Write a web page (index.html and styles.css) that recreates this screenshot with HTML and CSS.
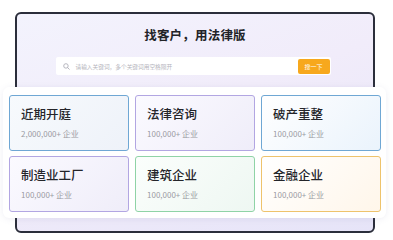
FILE: index.html
```html
<!DOCTYPE html>
<html lang="zh">
<head>
<meta charset="utf-8">
<link rel="stylesheet" href="styles.css">
</head>
<body>
<div class="frame">
  <h1 class="title">找客户，用法律版</h1>
  <div class="search">
    <svg class="search-icon" width="7" height="7" viewBox="0 0 10 10"><circle cx="4.2" cy="4.2" r="3.2" fill="none" stroke="#b0b0b8" stroke-width="1.3"/><path d="M6.6 6.6 L9 9" stroke="#b0b0b8" stroke-width="1.3" stroke-linecap="round"/></svg>
    <span class="placeholder">请输入关键词，多个关键词用空格隔开</span>
    <span class="btn">搜一下</span>
  </div>
  <div class="panel">
    <div class="card blue"><div class="c-title">近期开庭</div><div class="c-sub">2,000,000+ 企业</div></div>
    <div class="card purple"><div class="c-title">法律咨询</div><div class="c-sub">100,000+ 企业</div></div>
    <div class="card blue2"><div class="c-title">破产重整</div><div class="c-sub">100,000+ 企业</div></div>
    <div class="card purple"><div class="c-title">制造业工厂</div><div class="c-sub">100,000+ 企业</div></div>
    <div class="card green"><div class="c-title">建筑企业</div><div class="c-sub">100,000+ 企业</div></div>
    <div class="card orange"><div class="c-title">金融企业</div><div class="c-sub">100,000+ 企业</div></div>
  </div>
</div>
</body>
</html>
```
FILE: styles.css
```css
* { box-sizing: border-box; }
html, body { margin: 0; padding: 0; background: #ffffff; }
body {
  width: 393px;
  height: 240px;
  overflow: hidden;
  font-family: "Noto Sans CJK SC", "Noto Sans", sans-serif;
  padding-top: 12px;
}
.frame {
  margin-left: 15px;
  width: 360px;
  height: 221px;
  border: 2px solid #2b2e3b;
  border-radius: 6px;
  background: linear-gradient(160deg, #f3f3fd 0%, #f1ecfa 45%, #e6e4f8 100%);
  padding-top: 12px;
  display: flex;
  flex-direction: column;
  align-items: center;
}
.title {
  margin: 0;
  font-size: 12.5px;
  line-height: 18px;
  font-weight: 700;
  color: #222327;
  letter-spacing: 0.2px;
}
.search {
  margin-top: 13px;
  width: 275px;
  height: 18px;
  background: #ffffff;
  border-radius: 2px;
  display: flex;
  align-items: center;
  padding: 0 0 0 7px;
  margin-left: -4px;
}
.search-icon { flex: none; }
.placeholder {
  margin-left: 6px;
  font-size: 5.7px;
  color: #b4b4bc;
  flex: 1;
}
.btn {
  width: 32px;
  height: 15px;
  margin-right: 1px;
  background: #f7a81d;
  border-radius: 2px;
  color: #fff;
  font-size: 6px;
  display: flex;
  align-items: center;
  justify-content: center;
}
.panel {
  margin-top: 12px;
  align-self: stretch;
  margin-left: -14px;
  margin-right: -13px;
  background: #ffffff;
  border-radius: 6px;
  box-shadow: 0 1px 6px rgba(120, 120, 170, 0.12);
  padding: 8px 5px 6px 6px;
  display: grid;
  grid-template-columns: repeat(3, 120px);
  grid-auto-rows: 56px;
  column-gap: 6px;
  row-gap: 5px;
}
.card {
  border: 1px solid;
  border-radius: 3px;
  padding: 9px 0 0 11px;
}
.c-title {
  font-size: 12.5px;
  line-height: 18px;
  font-weight: 500;
  color: #24252a;
}
.c-sub {
  margin-top: 5px;
  font-size: 8px;
  line-height: 12px;
  color: #9a9aa2;
}
.blue { border-color: #6fa7d4; background: linear-gradient(135deg, #f7fafd 0%, #eef2f9 100%); }
.blue2 { border-color: #6fa7d4; background: linear-gradient(135deg, #ffffff 0%, #eaf3fc 100%); }
.purple { border-color: #b2a6e2; background: linear-gradient(135deg, #fbfaff 0%, #efedf9 100%); }
.green { border-color: #8fd3a6; background: linear-gradient(135deg, #fbfefc 0%, #eef7f2 100%); }
.orange { border-color: #eec36c; background: linear-gradient(135deg, #ffffff 0%, #fff6ea 100%); }
```
